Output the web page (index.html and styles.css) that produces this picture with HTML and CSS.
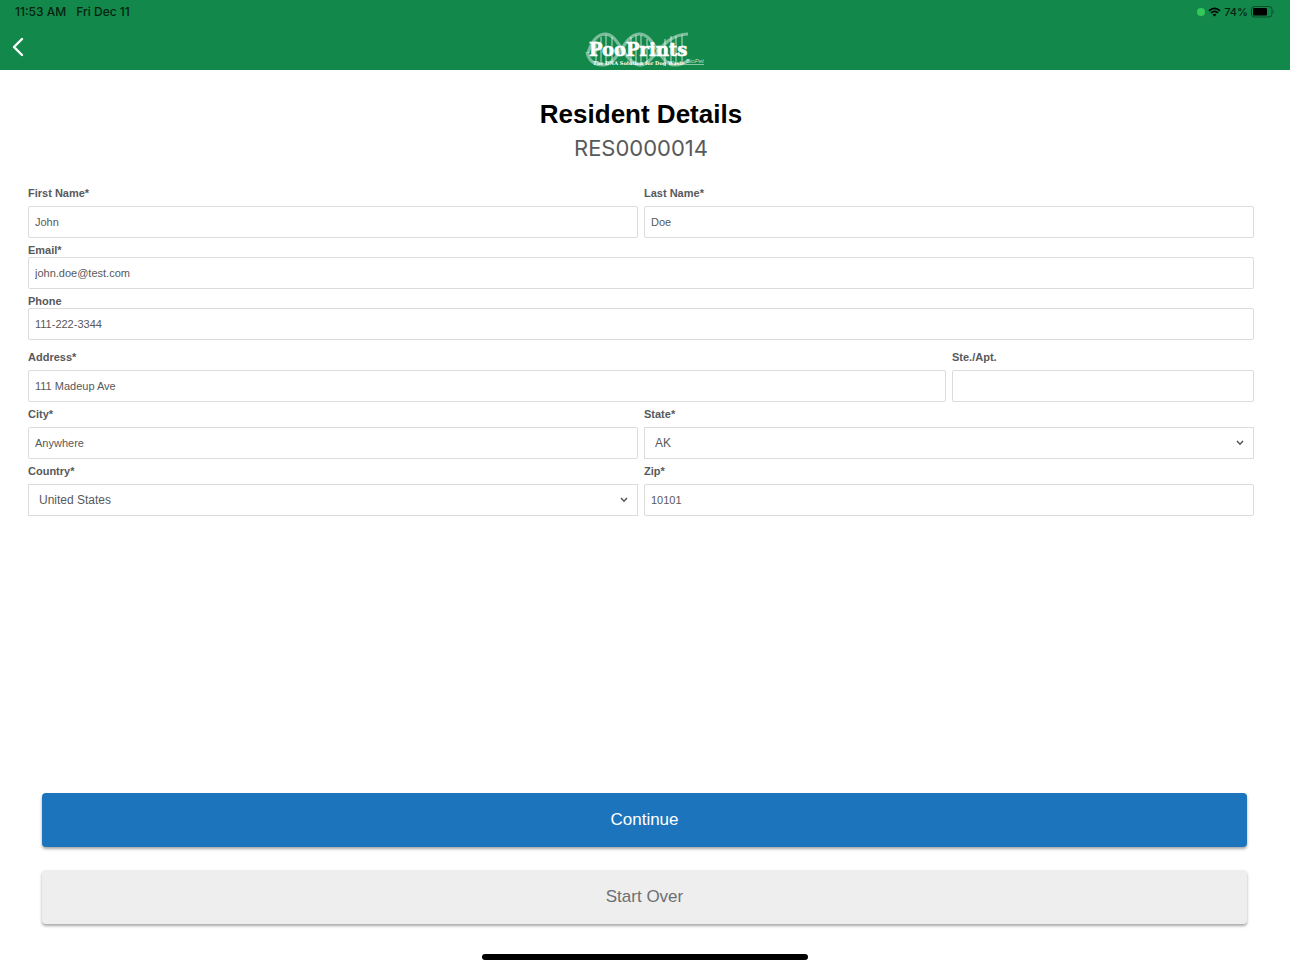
FILE: index.html
```html
<!doctype html>
<html lang="en">
<head>
	<meta charset="utf-8">
	<meta name="viewport" content="width=device-width, initial-scale=1">
	<title>PooPrints: Resident Details</title>
	<link rel="stylesheet" href="styles.css">
</head>
<body>
<header class="app-header">
	<div class="status-bar">
		<div class="status-group status-left">
			<span>11:53 AM</span>
			<span>Fri Dec 11</span>
		</div>
		<div class="status-group">
			<span class="camera-dot"></span>
			<svg class="wifi" width="13" height="10" viewBox="0 0 14 10" fill="none" stroke="currentColor" stroke-width="1.8">
				<path d="M1 3.7Q7 -1.7 13 3.7"/>
				<path d="M3.2 6Q7 2.6 10.8 6"/>
				<path d="M7 9.8L4.9 7.6Q7 5.9 9.1 7.6Z" fill="currentColor" stroke="none"/>
			</svg>
			<span>74%</span>
			<svg class="battery" width="24" height="12" viewBox="0 0 24 12">
				<rect x="0.5" y="0.5" width="20.5" height="10.5" rx="3" fill="none" stroke="#000" stroke-opacity=".45"/>
				<rect x="2" y="2" width="14" height="7.5" rx="1" fill="#000"/>
				<path d="M22.3 4Q24 5.7 22.3 7.5Z" fill="#000" fill-opacity=".5"/>
			</svg>
		</div>
	</div>
	<nav class="nav-bar">
		<a class="back" href="#" aria-label="Back">
			<svg width="12" height="20" viewBox="0 0 12 20" fill="none" stroke="#fff" stroke-width="2.4" stroke-linecap="round" stroke-linejoin="round"><path d="M10 2L2 10L10 18"/></svg>
		</a>
		<svg class="logo" width="120" height="46" viewBox="0 -7 120 46" role="img" aria-label="PooPrints">
			<g fill="none" stroke="#fff" stroke-opacity=".45">
				<g stroke-width="1.6">
					<path d="M11 10V32M16 6V33M21 4V34M27 6V32M46 6V33M51 4V34M56 4V34M62 8V31M80 8V33M86 5V34M91 5V33M97 4V32"/>
				</g>
				<g stroke-width="3.2">
					<path d="M3 22C7 9 13 3 21 3C34 4 39 31 54 34C68 36 76 3 103 3"/>
					<path d="M2 21C4 31 10 34 18 34C34 34 38 4 54 3C69 2 74 33 89 34C96 34 100 32 104 29"/>
				</g>
			</g>
			<text class="logo-name" x="4" y="25">PooPrints</text>
			<text class="logo-tag" x="8" y="34">The DNA Solution for Dog Waste</text>
			<text class="logo-by" x="101" y="32">BioPet</text>
			<path d="M100 33.5H119" stroke="#fff" stroke-opacity=".5"/>
		</svg>
	</nav>
</header>

<main class="page">
	<h1 class="title">Resident Details</h1>
	<p class="record-id">RES0000014</p>

	<form id="resident" class="form">
		<div class="field half">
			<label for="first-name">First Name*</label>
			<input id="first-name" type="text" value="John">
		</div>
		<div class="field half">
			<label for="last-name">Last Name*</label>
			<input id="last-name" type="text" value="Doe">
		</div>
		<div class="field full">
			<label for="email">Email*</label>
			<input id="email" type="email" value="john.doe@test.com">
		</div>
		<div class="field full">
			<label for="phone">Phone</label>
			<input id="phone" type="tel" value="111-222-3344">
		</div>
		<div class="field wide address">
			<label for="address">Address*</label>
			<input id="address" type="text" value="111 Madeup Ave">
		</div>
		<div class="field address">
			<label for="suite">Ste./Apt.</label>
			<input id="suite" type="text">
		</div>
		<div class="field half">
			<label for="city">City*</label>
			<input id="city" type="text" value="Anywhere">
		</div>
		<div class="field half">
			<label for="state">State*</label>
			<div class="select">
				<select id="state">
					<option>AK</option>
				</select>
				<svg class="chevron" width="8" height="6" viewBox="0 0 8 6" fill="none" stroke="#555" stroke-width="1.5"><path d="M1 1L4 4.2L7 1"/></svg>
			</div>
		</div>
		<div class="field half">
			<label for="country">Country*</label>
			<div class="select">
				<select id="country">
					<option>United States</option>
				</select>
				<svg class="chevron" width="8" height="6" viewBox="0 0 8 6" fill="none" stroke="#555" stroke-width="1.5"><path d="M1 1L4 4.2L7 1"/></svg>
			</div>
		</div>
		<div class="field half">
			<label for="zip">Zip*</label>
			<input id="zip" type="text" value="10101">
		</div>
	</form>
</main>

<footer class="actions">
	<button class="btn primary" type="submit" form="resident">Continue</button>
	<button class="btn" type="reset" form="resident">Start Over</button>
	<div class="home-indicator"></div>
</footer>
</body>
</html>
```
FILE: styles.css
```css
* {
	box-sizing: border-box;
}

body {
	display: flex;
	flex-direction: column;
	min-height: 100vh;
	margin: 0;
	color: #58595b;
	background: #fff;
	font-family: "Liberation Sans", Arial, sans-serif;
}

.app-header {
	height: 70px;
	background: #12894b;
}

.status-bar {
	display: flex;
	justify-content: space-between;
	height: 24px;
	padding: 0 15px;
	color: #06210f;
	font: 500 11px/24px Inter, sans-serif;
}

.status-group {
	display: flex;
	align-items: center;
	gap: 3px;
}

.status-left {
	gap: 10px;
	font-size: 12px;
}

.camera-dot {
	width: 8px;
	height: 8px;
	border-radius: 50%;
	background: #34c759;
}

.wifi {
	color: #000;
}

.nav-bar {
	display: grid;
	grid-template-columns: 1fr auto 1fr;
	align-items: center;
	height: 46px;
	padding: 0 12px;
}

.back {
	display: flex;
}

.logo-name {
	fill: #fff;
	stroke: #fff;
	stroke-width: .6px;
	font: bold 18px "DejaVu Serif", serif;
}

.logo-tag {
	fill: #fff;
	font: bold 5px "DejaVu Serif", serif;
}

.logo-by {
	fill: #fff;
	fill-opacity: .7;
	font: italic 6px "Liberation Sans", sans-serif;
}

.page {
	flex: 1;
	padding: 28px 36px 24px 28px;
}

.title {
	margin: 0;
	color: #000;
	font-size: 26px;
	line-height: 32px;
	text-align: center;
}

.record-id {
	margin: 4px 0 24px;
	font: 22px/28px Inter, sans-serif;
	text-align: center;
}

.form {
	display: grid;
	grid-template-columns: repeat(4, 1fr);
	gap: 5px 6px;
}

.field {
	display: flex;
	flex-direction: column;
	gap: 6px;
}

.half {
	grid-column: span 2;
}

.wide {
	grid-column: span 3;
}

.full {
	grid-column: span 4;
	gap: 0;
}

.address {
	margin-top: 5px;
}

label {
	font-size: 11px;
	font-weight: bold;
	line-height: 14px;
}

input, select {
	width: 100%;
	height: 32px;
	padding: 0 6px;
	border: 1px solid #dcdcdc;
	border-radius: 2px;
	color: #58595b;
	background: #fff;
	font: 11px "Liberation Sans", Arial, sans-serif;
}

.select {
	position: relative;
}

select {
	appearance: none;
	padding: 0 24px 0 10px;
	border-radius: 0;
	font-size: 12px;
}

.chevron {
	position: absolute;
	top: 13px;
	right: 10px;
	pointer-events: none;
}

.actions {
	display: flex;
	flex-direction: column;
	gap: 23px;
	padding: 0 43px 7px 42px;
}

.btn {
	height: 54px;
	border: 0;
	border-radius: 4px;
	color: #6d6e71;
	background: #eee;
	box-shadow: 0 2px 3px rgba(0, 0, 0, .35);
	font: 17px "Liberation Sans", Arial, sans-serif;
}

.primary {
	color: #fff;
	background: #1c75bc;
}

.home-indicator {
	align-self: center;
	width: 326px;
	height: 6px;
	margin-top: 7px;
	border-radius: 3px;
	background: #000;
}
```
